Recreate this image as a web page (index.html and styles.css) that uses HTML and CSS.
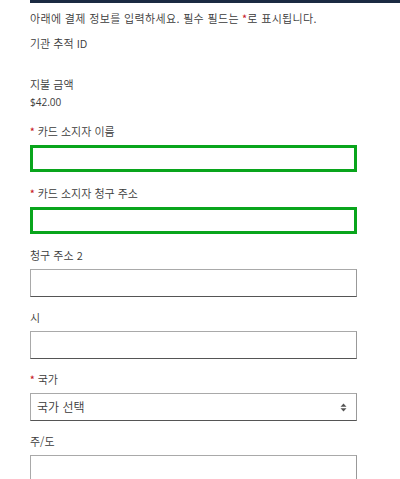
FILE: index.html
```html
<!DOCTYPE html>
<html lang="ko">
<head>
<meta charset="utf-8">
<link rel="stylesheet" href="styles.css">
</head>
<body>
<div class="page">
  <div class="topbar"></div>
  <p class="intro">아래에 결제 정보를 입력하세요. 필수 필드는 <span class="req">*</span>로 표시됩니다.</p>
  <div class="info">기관 추적 ID</div>
  <div class="info amount-label">지불 금액</div>
  <div class="amount">$42.00</div>

  <div class="field">
    <label class="label"><span class="req">*</span> 카드 소지자 이름</label>
    <div class="input valid"></div>
  </div>
  <div class="field">
    <label class="label"><span class="req">*</span> 카드 소지자 청구 주소</label>
    <div class="input valid"></div>
  </div>
  <div class="field">
    <label class="label">청구 주소 2</label>
    <div class="input"></div>
  </div>
  <div class="field">
    <label class="label">시</label>
    <div class="input"></div>
  </div>
  <div class="field">
    <label class="label"><span class="req">*</span> 국가</label>
    <div class="input select">
      <span class="select-text">국가 선택</span>
      <svg class="arrows" width="7" height="9" viewBox="0 0 7 9"><path d="M3.5 0.5 L6.5 3.8 L0.5 3.8 Z M3.5 8.5 L6.5 5.2 L0.5 5.2 Z" fill="#555"/></svg>
    </div>
  </div>
  <div class="field">
    <label class="label">주/도</label>
    <div class="input"></div>
  </div>
</div>
</body>
</html>
```
FILE: styles.css
```css
html, body {
  margin: 0;
  padding: 0;
  background: #fff;
}
body {
  font-family: "Noto Sans CJK KR", "Noto Sans", sans-serif;
  font-size: 11px;
  font-weight: 350;
  color: #3a3a3a;
}
.page {
  padding-left: 30px;
  width: 327px;
}
.topbar {
  height: 3px;
  margin-right: -43px;
  background: #1b2a42;
}
.intro {
  margin: 7px 0 0;
  line-height: 16px;
  letter-spacing: 0.35px;
}
.req {
  color: #c8202a;
  font-size: 9px;
  font-weight: 700;
  line-height: 0;
  vertical-align: 1px;
}
.info {
  margin-top: 9px;
  line-height: 16px;
}
.amount-label {
  margin-top: 25px;
}
.amount {
  margin-top: 2px;
  line-height: 16px;
  font-size: 10px;
  font-weight: 400;
  font-family: "Open Sans", "Noto Sans", sans-serif;
}
.field {
  display: flex;
  flex-direction: column;
}
.label {
  display: block;
  height: 16px;
  line-height: 16px;
  margin-top: 12px;
  margin-bottom: 6px;
}
.amount + .field .label {
  margin-top: 13px;
}
.input {
  box-sizing: border-box;
  height: 28px;
  border: 1px solid #a9a9a9;
  border-bottom-color: #555;
  border-right-color: #999;
  background: #fff;
}
.input.valid {
  height: 27px;
  border: 3px solid #09a51c;
}
.field:has(.valid) + .field .label {
  margin-top: 13px;
}
.select {
  display: flex;
  align-items: center;
  justify-content: space-between;
  padding: 0 9px 0 6px;
  font-size: 12px;
}
.select-text {
  line-height: 16px;
}
.arrows {
  display: block;
}
```
